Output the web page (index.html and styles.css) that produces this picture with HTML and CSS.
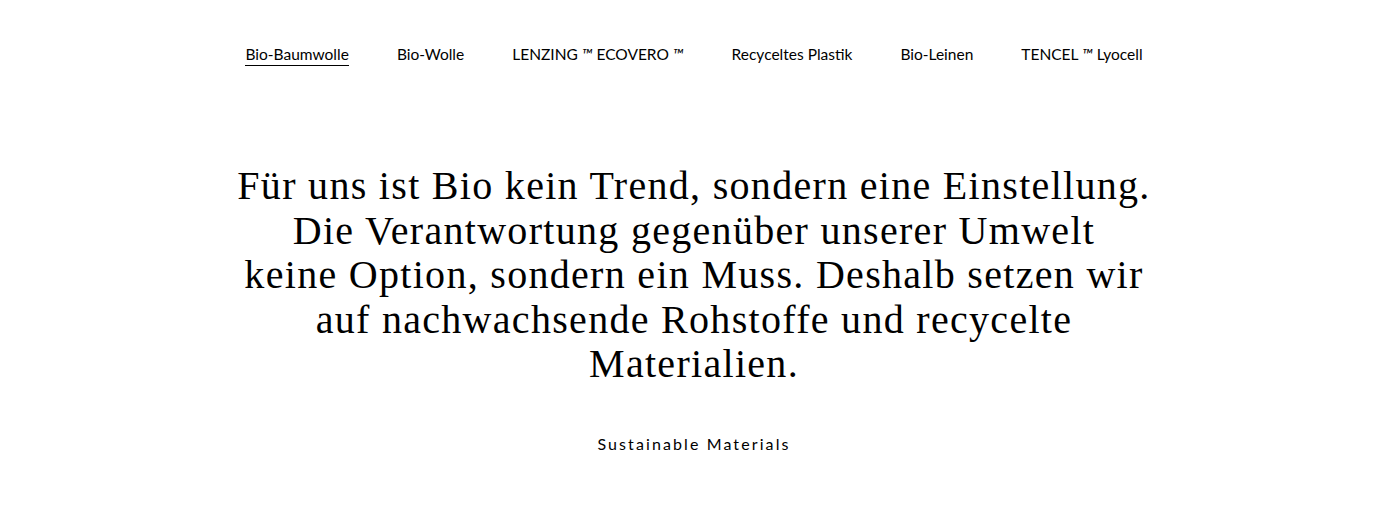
FILE: index.html
```html
<!DOCTYPE html>
<html lang="de">
<head>
<meta charset="utf-8">
<title>Sustainable Materials</title>
<link rel="stylesheet" href="styles.css">
</head>
<body>
<div class="page">
  <nav class="tabs">
    <a class="tab active" href="#">Bio-Baumwolle</a>
    <a class="tab" href="#">Bio-Wolle</a>
    <a class="tab" href="#">LENZING <em>™</em> ECOVERO <em>™</em></a>
    <a class="tab" href="#">Recyceltes Plastik</a>
    <a class="tab" href="#">Bio-Leinen</a>
    <a class="tab" href="#">TENCEL <em>™</em> Lyocell</a>
  </nav>
  <section class="intro">
    <h1 class="statement">Für uns ist Bio kein Trend, sondern eine Einstellung.<br>Die Verantwortung gegenüber unserer Umwelt<br>keine Option, sondern ein Muss. Deshalb setzen wir<br>auf nachwachsende Rohstoffe und recycelte<br>Materialien.</h1>
    <p class="label">Sustainable Materials</p>
  </section>
</div>
</body>
</html>
```

FILE: styles.css
```css
html, body {
  margin: 0;
  padding: 0;
  background: #fff;
  color: #000;
}
.page {
  width: 1388px;
  padding-right: 10px;
  box-sizing: content-box;
  display: flex;
  flex-direction: column;
  align-items: center;
}
.tabs {
  display: flex;
  gap: 48px;
  padding-top: 44px;
  font-family: Lato, "Noto Sans", sans-serif;
  font-size: 15.5px;
  line-height: 20px;
}
.tab {
  color: #000;
  text-decoration: none;
  padding-bottom: 1px;
  border-bottom: 1px solid transparent;
}
.tab.active {
  border-bottom-color: #000;
}
.tab em {
  font-style: italic;
}
.intro {
  display: flex;
  flex-direction: column;
  align-items: center;
  padding-top: 98px;
}
.statement {
  margin: 0;
  font-family: "Liberation Serif", serif;
  font-weight: normal;
  font-size: 40px;
  letter-spacing: 1.3px;
  line-height: 44.5px;
  text-align: center;
}
.label {
  margin: 47px 0 0;
  font-family: Lato, "Noto Sans", sans-serif;
  font-size: 16px;
  letter-spacing: 2.1px;
}
```
